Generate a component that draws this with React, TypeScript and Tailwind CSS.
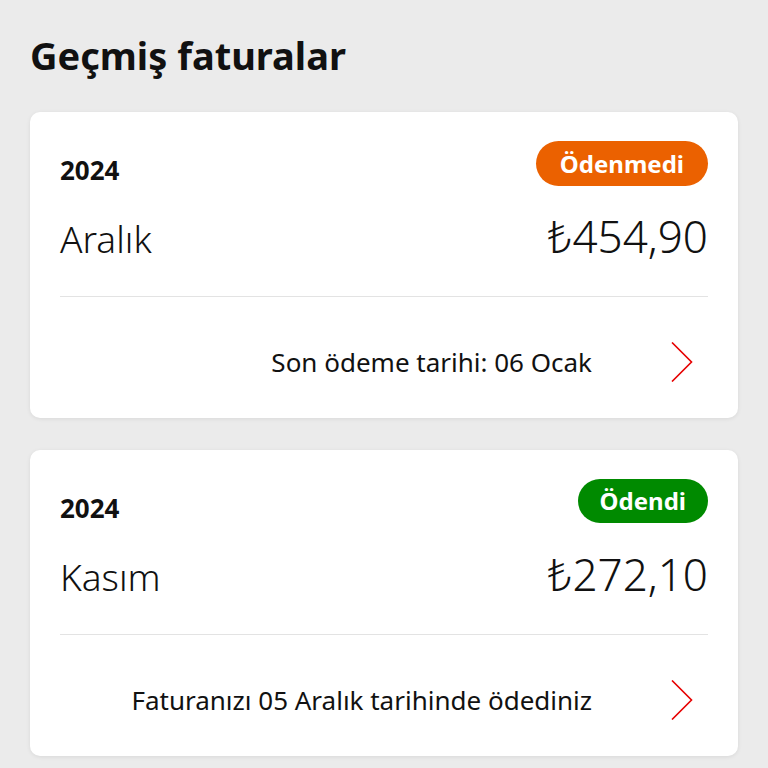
import React from 'react';

type Bill = {
  year: string;
  month: string;
  amount: string;
  paid: boolean;
  note: string;
};

const bills: Bill[] = [
  { year: '2024', month: 'Aralık', amount: '454,90', paid: false, note: 'Son ödeme tarihi: 06 Ocak' },
  { year: '2024', month: 'Kasım', amount: '272,10', paid: true, note: 'Faturanızı 05 Aralık tarihinde ödediniz' },
];

function Chevron() {
  return (
    <svg width="22" height="40" viewBox="0 0 22 40" fill="none" className="shrink-0">
      <path d="M1 0.5 L20.5 20 L1 39.5" stroke="#e60000" strokeWidth="1.6" strokeLinejoin="miter" />
    </svg>
  );
}

function BillCard({ bill }: { bill: Bill }) {
  return (
    <div className="rounded-[10px] bg-white px-[30px] pt-[29px] shadow-[0_1px_4px_rgba(0,0,0,0.08)]">
      <div className="flex h-[45px] items-end justify-between">
        <span className="pb-[1px] text-[26px] font-bold leading-[30px] text-[#111]">{bill.year}</span>
        <span
          className={
            bill.paid
              ? 'flex h-[44px] items-center self-start rounded-full bg-[#008a00] px-[22px] text-[24px] font-bold text-white'
              : 'flex h-[45px] items-center self-start rounded-full bg-[#eb6100] px-[24px] text-[24px] font-bold text-white'
          }
        >
          {bill.paid ? 'Ödendi' : 'Ödenmedi'}
        </span>
      </div>
      <div className="mt-[26px] mb-[36px] flex h-[48px] items-baseline justify-between leading-[48px] text-[#111]">
        <span className="text-[37px] font-light">{bill.month}</span>
        <span className="text-[44px] font-light">₺{bill.amount}</span>
      </div>
      <div className="h-px bg-[#e3e3e3]" />
      <div className="flex items-center justify-end pt-[45px] pb-[36px]">
        <span className="mr-[79px] text-[26px] leading-[40px] text-[#111]">{bill.note}</span>
        <div className="mr-[15px]">
          <Chevron />
        </div>
      </div>
    </div>
  );
}

export default function App() {
  return (
    <main
      className="min-h-screen bg-[#ebebeb] px-[30px] pt-[33px]"
      style={{ fontFamily: '"Noto Sans", "Open Sans", sans-serif' }}
    >
      <h1 className="text-[38px] font-bold leading-[44px] text-[#111]">Geçmiş faturalar</h1>
      <div className="mt-[35px] flex flex-col gap-[32px]">
        {bills.map((b) => (
          <BillCard key={b.month} bill={b} />
        ))}
      </div>
    </main>
  );
}
